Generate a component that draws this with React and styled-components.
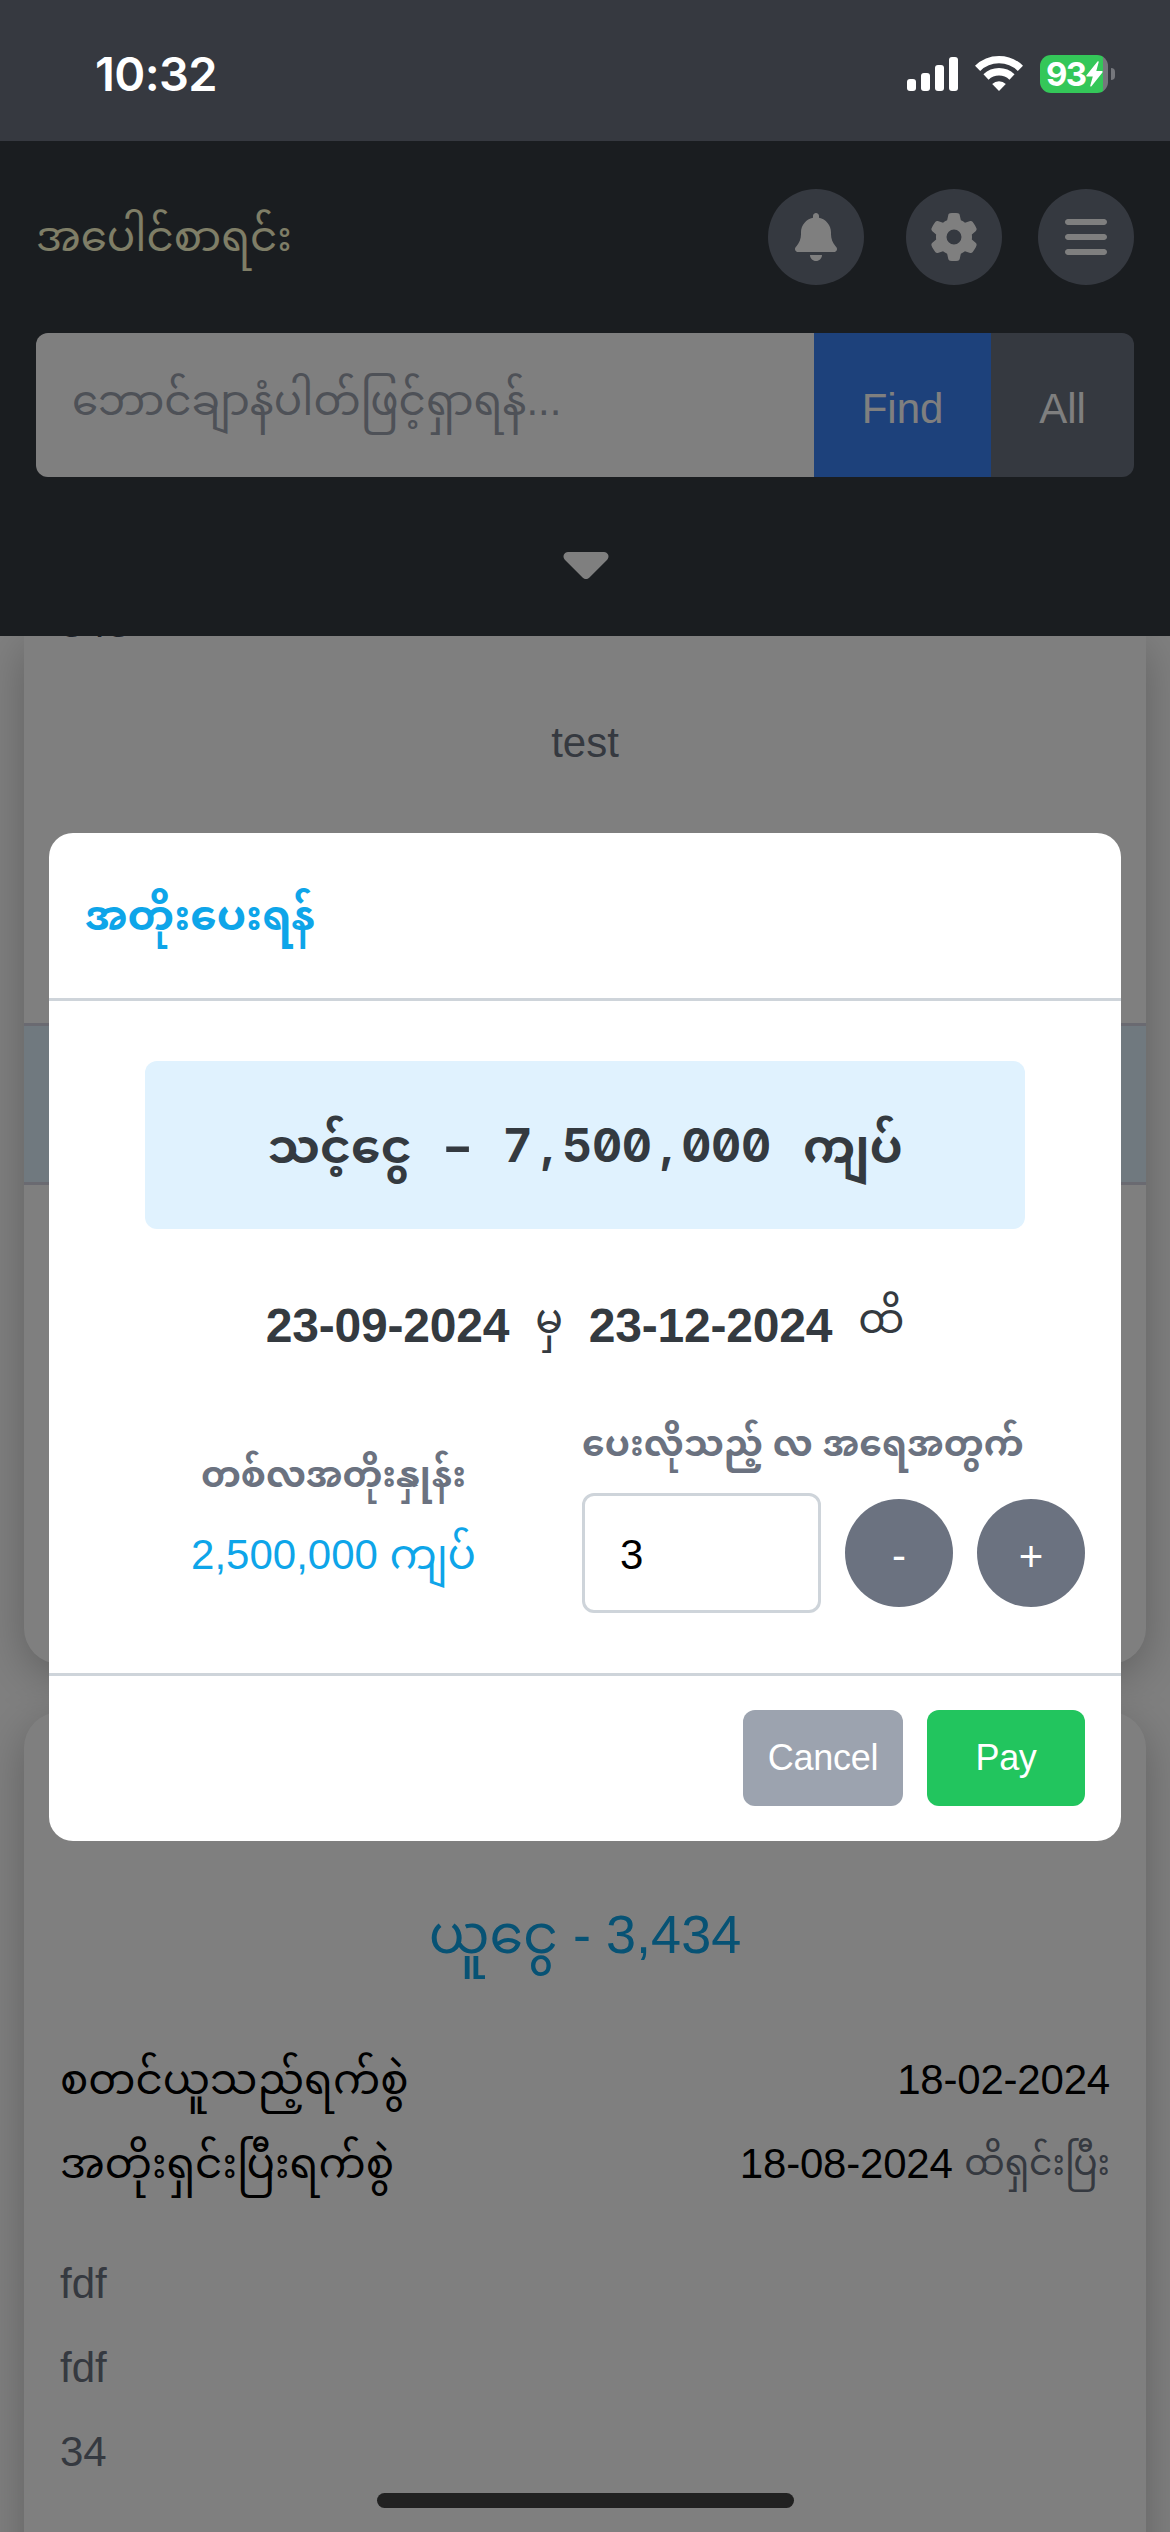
import React from "react";
import styled, { createGlobalStyle } from "styled-components";
import { FaBell, FaGear, FaBars, FaCaretDown } from "react-icons/fa6";

const GlobalStyle = createGlobalStyle`
  *, *::before, *::after { box-sizing: border-box; }
  html, body { margin: 0; padding: 0; background: #fff; }
  body { font-family: "Liberation Sans", "Noto Sans Myanmar", sans-serif; font-size: 42px; line-height: 72px; }
  button, input { font: inherit; border: 0; margin: 0; }
`;

const Screen = styled.div`
  position: relative;
  width: 1170px;
  height: 2532px;
  overflow: hidden;
  display: flex;
  flex-direction: column;
  background: #fff;
`;

/* Status bar */
const StatusBar = styled.div`
  flex: none;
  height: 141px;
  padding: 0 55px 0 95px;
  display: flex;
  justify-content: space-between;
  align-items: flex-start;
  background: #363940;
  color: #fff;
`;
const Clock = styled.div`
  margin-top: 44px;
  font-family: Inter, sans-serif;
  font-weight: 600;
  font-size: 47px;
  line-height: 60px;
  letter-spacing: -0.6px;
`;
const StatusIcons = styled.div`
  margin-top: 55px;
  display: flex;
  align-items: flex-start;
  gap: 17px;
`;
const Battery = styled.div`
  display: flex;
  align-items: center;
  gap: 3px;
  &::after {
    content: "";
    width: 4px;
    height: 12px;
    border-radius: 0 6px 6px 0;
    background: #75777c;
  }
`;
const BatteryBody = styled.div`
  width: 68px;
  height: 38px;
  padding-left: 6px;
  border-radius: 11px;
  display: flex;
  align-items: center;
  background: linear-gradient(90deg, #34c759 63px, #75777c 63px);
  font-family: Inter, sans-serif;
  font-weight: 700;
  font-size: 33px;
  line-height: 38px;
  letter-spacing: -1.6px;
`;

/* Header */
const Header = styled.header`
  flex: none;
  height: 495px;
  padding: 48px 36px 0;
  display: flex;
  flex-direction: column;
  background: #343a40;
`;
const TitleRow = styled.div`
  height: 96px;
  display: flex;
  align-items: center;
`;
const Title = styled.h1`
  margin: 0 auto 0 0;
  font-size: 42px;
  font-weight: 400;
  color: #fefcce;
`;
const RoundButton = styled.button`
  width: ${(p) => p.$size}px;
  height: ${(p) => p.$size}px;
  margin-left: ${(p) => p.$gap || 0}px;
  padding: ${(p) => p.$drop || 0}px 0 0;
  border-radius: 50%;
  display: flex;
  align-items: center;
  justify-content: center;
  flex: none;
  background: #6b7280;
  color: #fff;
`;
const SearchRow = styled.div`
  height: 144px;
  margin-top: 48px;
  display: flex;
  border-radius: 12px;
  overflow: hidden;
`;
const SearchField = styled.input`
  flex: 1;
  min-width: 0;
  padding: 0 36px 9px;
  background: #fff;
  outline: none;
  &::placeholder { color: #9ca3af; opacity: 1; }
`;
const SearchButton = styled.button`
  width: ${(p) => p.$width}px;
  padding: 7px 0 0;
  background: ${(p) => p.$bg};
  color: #fff;
`;
const Toggle = styled.div`
  margin-top: 48px;
  display: flex;
  justify-content: center;
  padding-left: 2px;
  color: #fff;
`;

/* Records */
const Records = styled.main`
  flex: 1;
  min-height: 0;
  padding: 0 24px;
  display: flex;
  flex-direction: column;
  gap: 48px;
  overflow: hidden;
`;
const Card = styled.section`
  display: flow-root;
  flex: none;
  height: ${(p) => p.$height}px;
  border-radius: ${(p) => (p.$cut ? "0 0 36px 36px" : "36px")};
  background: #fff;
  box-shadow: 0 12px 45px rgba(0, 0, 0, 0.25);
  color: #6b7280;
`;
const CutLine = styled.div`
  height: 36px;
  margin: -31px 0 66px;
  padding-left: 36px;
  line-height: 36px;
  color: #374151;
`;
const CenterLine = styled.div`
  text-align: center;
`;
const Band = styled.div`
  height: 162px;
  margin-top: 244px;
  border: solid #d4d4e2;
  border-width: 3px 0;
  background: #e0f2fe;
`;
const LoanAmount = styled.h2`
  margin: 0;
  padding-top: 186px;
  font-size: 54px;
  font-weight: 400;
  line-height: 72px;
  text-align: center;
  color: #0ea5e9;
`;
const Rows = styled.div`
  padding: 68px 36px 0;
`;
const Row = styled.div`
  height: 84px;
  line-height: 84px;
  display: flex;
  justify-content: space-between;
  color: #000;
`;
const DateText = styled.span`
  letter-spacing: -0.2px;
`;
const Note = styled.span`
  display: inline-block;
  font-size: 36px;
  line-height: 82px;
  vertical-align: top;
  letter-spacing: 0;
  color: #6b7280;
`;
const Details = styled.div`
  padding: 36px 36px 0;
  line-height: 84px;
`;

/* Modal */
const Overlay = styled.div`
  position: absolute;
  inset: 141px 0 0;
  display: flex;
  align-items: center;
  justify-content: center;
  background: rgba(0, 0, 0, 0.5);
`;
const Dialog = styled.div`
  width: 1072px;
  height: 1008px;
  border-radius: 24px;
  display: flex;
  flex-direction: column;
  overflow: hidden;
  background: #fff;
`;
const DialogHeader = styled.div`
  height: 168px;
  padding: 2px 36px 0;
  display: flex;
  align-items: center;
  border-bottom: 3px solid #ced4da;
  font-size: 42px;
  font-weight: 700;
  color: #0ea5e9;
`;
const DialogBody = styled.div`
  flex: 1;
  padding: 60px 36px 0;
`;
const AmountBox = styled.div`
  width: 880px;
  height: 168px;
  margin: 0 auto;
  border-radius: 12px;
  display: flex;
  align-items: center;
  justify-content: center;
  gap: 32px;
  background: #e0f2fe;
  color: #343a40;
  font-size: 47px;
  font-weight: 700;
`;
const Word = styled.span`
  padding-top: 5px;
`;
const Digits = styled.span`
  display: flex;
  font-family: Inter, sans-serif;
  font-size: 46px;
  font-weight: 650;
  font-feature-settings: "zero", "tnum";
`;
const Digit = styled.span`
  width: 29.8px;
  display: flex;
  justify-content: center;
`;
const Dash = styled.span`
  display: inline-block;
  width: 27px;
  text-align: center;
  transform: scaleX(1.9);
`;
const Period = styled.div`
  height: 72px;
  margin-top: 61px;
  display: flex;
  justify-content: center;
  gap: 26px;
  color: #343a40;
  font-size: 48px;
  font-weight: 700;
  letter-spacing: -0.2px;
`;
const Particle = styled.span`
  font-size: 41px;
  font-weight: 400;
  line-height: 58px;
`;
const PayGrid = styled.div`
  margin-top: 55px;
  display: grid;
  grid-template-columns: 1fr 503px;
`;
const Rate = styled.div`
  padding-top: 31px;
  text-align: center;
  color: #0ea5e9;
`;
const Label = styled.div`
  height: 54px;
  line-height: 54px;
  margin-bottom: ${(p) => p.$gap}px;
  font-size: 36px;
  font-weight: 700;
  white-space: nowrap;
  color: #6b7280;
`;
const Stepper = styled.div`
  display: flex;
  align-items: center;
  gap: 24px;
`;
const MonthInput = styled.input`
  width: 239px;
  height: 120px;
  padding: 4px 35px 0;
  border: 3px solid #ced4da;
  border-radius: 12px;
  background: #fff;
  color: #000;
`;
const DialogFooter = styled.div`
  height: 168px;
  padding: 0 36px;
  display: flex;
  align-items: center;
  justify-content: flex-end;
  gap: 24px;
  border-top: 3px solid #ced4da;
`;
const ActionButton = styled.button`
  width: ${(p) => p.$width}px;
  height: 96px;
  padding: 0;
  border-radius: 12px;
  background: ${(p) => p.$bg};
  color: #fff;
  font-size: 36px;
  letter-spacing: -0.3px;
`;
const HomeIndicator = styled.div`
  position: absolute;
  left: 377px;
  bottom: 24px;
  width: 417px;
  height: 15px;
  border-radius: 8px;
  background: #212121;
`;

const Signal = () => (
  <svg width="51" height="36" viewBox="0 0 51 36" fill="#fff">
    <rect x="0" y="24" width="9" height="12" rx="3" />
    <rect x="14" y="18" width="9" height="18" rx="3" />
    <rect x="28" y="10" width="9" height="26" rx="3" />
    <rect x="42" y="2" width="9" height="34" rx="3" />
  </svg>
);
const Wifi = () => (
  <svg width="48" height="36" viewBox="0 0 48 36" fill="none" stroke="#fff" strokeWidth="7.4">
    <path d="M2.6 13.4a30.5 30.5 0 0 1 42.8 0" />
    <path d="M11 22a18.8 18.8 0 0 1 26 0" />
    <path d="M24 36l-6.8-7a9.8 9.8 0 0 1 13.6 0z" fill="#fff" stroke="none" />
  </svg>
);
const Bolt = () => (
  <svg width="17" height="26" viewBox="0 0 17 26" fill="#fff">
    <path d="M11.5 0.5 0.5 14.2c-.5.7-.2 1.3.5 1.3h5.8L4.3 24.6c-.2 1 .6 1.3 1.2.6L16.4 11.4c.5-.7.2-1.3-.5-1.3h-5.6L12.7 1.1c.2-.9-.6-1.200-1.200-.6z" />
  </svg>
);

export default function App() {
  return (
    <Screen>
      <GlobalStyle />
      <StatusBar>
        <Clock>10:32</Clock>
        <StatusIcons>
          <Signal />
          <Wifi />
          <Battery>
            <BatteryBody>93<Bolt /></BatteryBody>
          </Battery>
        </StatusIcons>
      </StatusBar>
      <Header>
        <TitleRow>
          <Title>အပေါင်စာရင်း</Title>
          <RoundButton $size={96}><FaBell size={48} /></RoundButton>
          <RoundButton $size={96} $gap={42}><FaGear size={48} /></RoundButton>
          <RoundButton $size={96} $gap={36}><FaBars size={48} /></RoundButton>
        </TitleRow>
        <SearchRow>
          <SearchField placeholder="ဘောင်ချာနံပါတ်ဖြင့်ရှာရန်..." />
          <SearchButton $width={177} $bg="#3b82f6">Find</SearchButton>
          <SearchButton $width={143} $bg="#6b7280">All</SearchButton>
        </SearchRow>
        <Toggle><FaCaretDown size={72} /></Toggle>
      </Header>
      <Records>
        <Card $cut $height={1028}>
          <CutLine>343</CutLine>
          <CenterLine>test</CenterLine>
          <Band />
        </Card>
        <Card $height={1000}>
          <LoanAmount>ယူငွေ - 3,434</LoanAmount>
          <Rows>
            <Row><span>စတင်ယူသည့်ရက်စွဲ</span><DateText>18-02-2024</DateText></Row>
            <Row><span>အတိုးရှင်းပြီးရက်စွဲ</span><DateText>18-08-2024 <Note>ထိရှင်းပြီး</Note></DateText></Row>
          </Rows>
          <Details>
            <div>fdf</div>
            <div>fdf</div>
            <div>34</div>
          </Details>
        </Card>
      </Records>
      <Overlay>
        <Dialog>
          <DialogHeader>အတိုးပေးရန်</DialogHeader>
          <DialogBody>
            <AmountBox>
              <Word>သင့်ငွေ</Word>
              <Dash>-</Dash>
              <Digits>{[..."7,500,000"].map((d, i) => <Digit key={i}>{d}</Digit>)}</Digits>
              <Word>ကျပ်</Word>
            </AmountBox>
            <Period>
              <span>23-09-2024</span>
              <Particle>မှ</Particle>
              <span>23-12-2024</span>
              <Particle>ထိ</Particle>
            </Period>
            <PayGrid>
              <Rate>
                <Label $gap={17}>တစ်လအတိုးနှုန်း</Label>
                <div>2,500,000 ကျပ်</div>
              </Rate>
              <div>
                <Label $gap={22}>ပေးလိုသည့် လ အရေအတွက်</Label>
                <Stepper>
                  <MonthInput defaultValue="3" />
                  <RoundButton $size={108} $drop={6}>-</RoundButton>
                  <RoundButton $size={108} $drop={9}>+</RoundButton>
                </Stepper>
              </div>
            </PayGrid>
          </DialogBody>
          <DialogFooter>
            <ActionButton $width={160} $bg="#9ca3af">Cancel</ActionButton>
            <ActionButton $width={158} $bg="#22c55e">Pay</ActionButton>
          </DialogFooter>
        </Dialog>
      </Overlay>
      <HomeIndicator />
    </Screen>
  );
}
